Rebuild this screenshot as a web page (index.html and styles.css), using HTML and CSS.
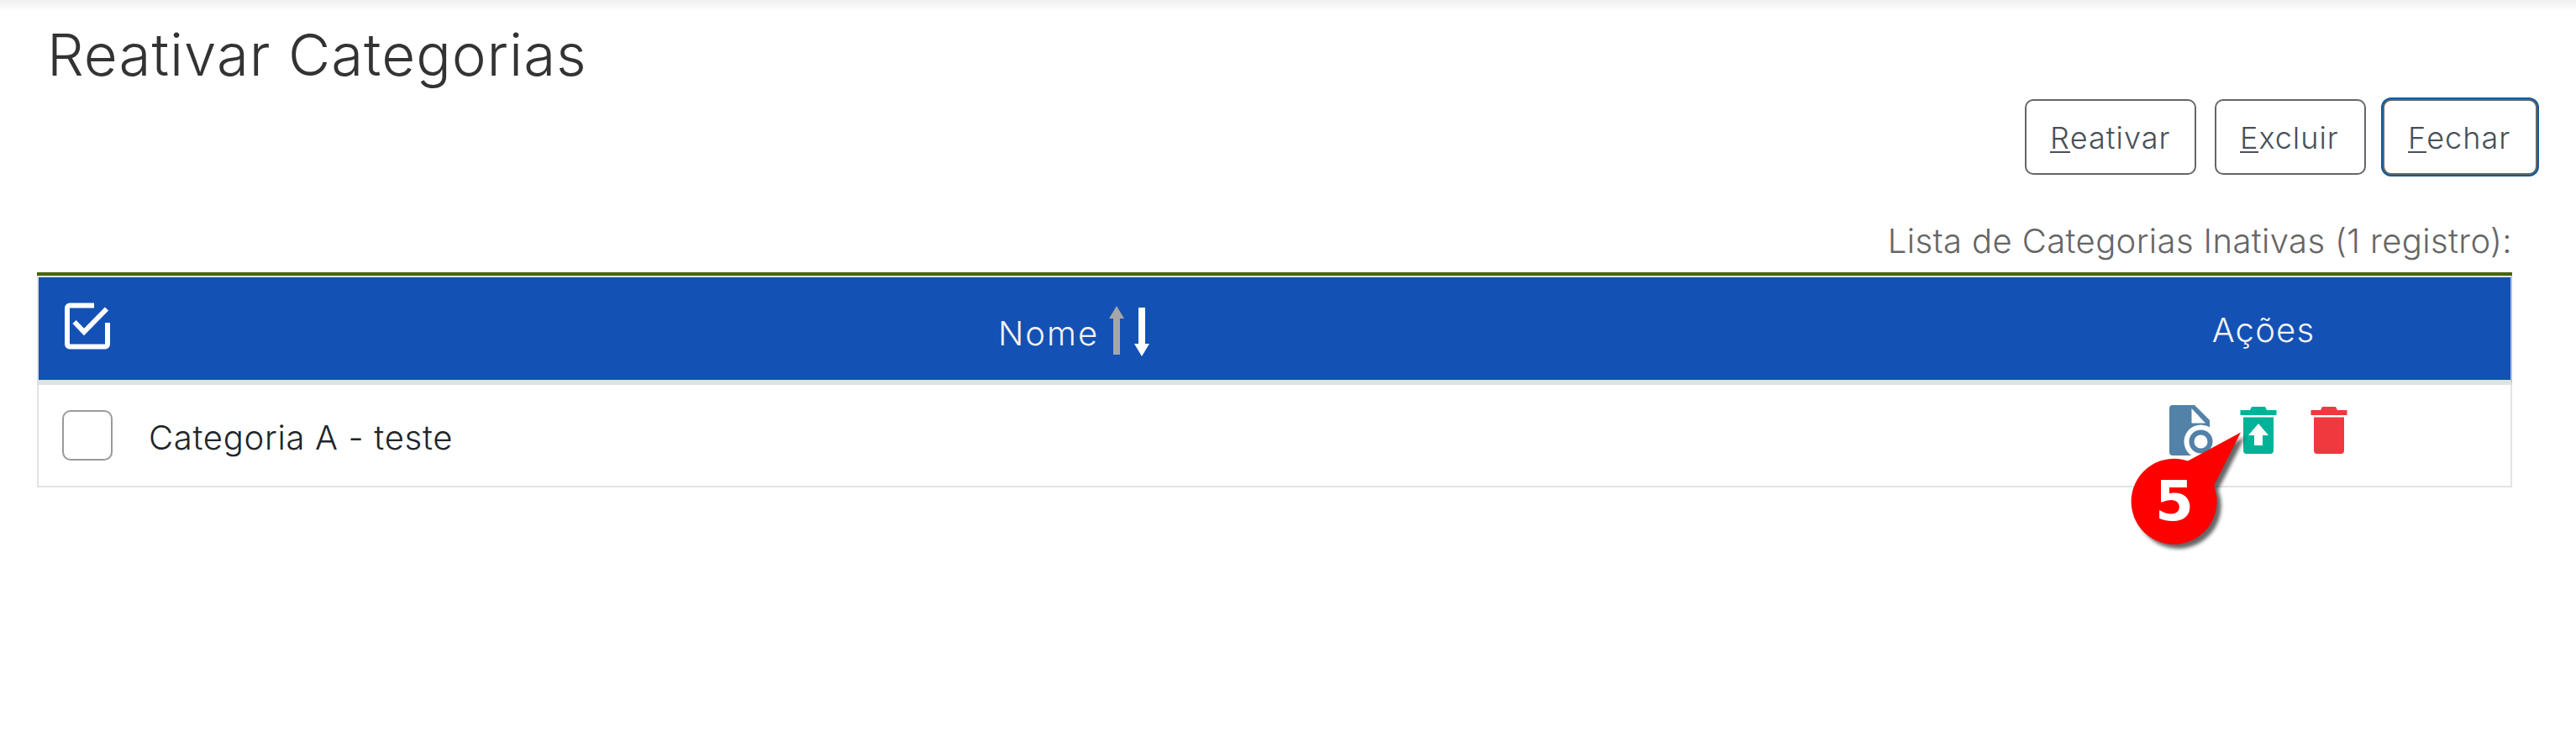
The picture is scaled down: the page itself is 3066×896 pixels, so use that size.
FILE: index.html
```html
<!DOCTYPE html>
<html lang="pt-BR">
<head>
<meta charset="utf-8">
<title>Reativar Categorias</title>
<link rel="stylesheet" href="styles.css">
</head>
<body>
<main class="page">
  <h1 class="title"><span>Reativar Categorias</span></h1>
  <div class="toolbar">
    <button class="btn btn-reativar"><u>R</u>eativar</button>
    <button class="btn btn-excluir"><u>E</u>xcluir</button>
    <button class="btn btn-fechar"><u>F</u>echar</button>
  </div>
  <div class="caption"><span>Lista de Categorias Inativas (1 registro):</span></div>
  <section class="table">
    <div class="row head">
      <div class="cell check">
        <svg class="check-all" width="60" height="60" viewBox="0 0 60 60" fill="none" stroke="#fff" stroke-width="6">
          <path d="M38 6.500H9a3 3 0 0 0-3 3v43a3 3 0 0 0 3 3h42a3 3 0 0 0 3-3V27"/>
          <path d="M14.500 26L26 38L53 10.500"/>
        </svg>
      </div>
      <div class="cell name-head">
        <span class="nome">Nome</span>
        <svg class="sort" width="52" height="62" viewBox="0 0 52 62">
          <path fill="#a6a6a6" d="M11 1L20 16H15V59H7V16H2Z"/>
          <path fill="#fff" d="M41 61L50 46H45V3H37V46H32Z"/>
        </svg>
      </div>
      <div class="cell actions-head"><span class="acoes">Ações</span></div>
    </div>
    <div class="row item">
      <div class="cell check"><span class="checkbox"></span></div>
      <div class="cell name"><span class="categoria">Categoria A - teste</span></div>
      <div class="cell actions">
        <svg class="icon" width="60" height="64" viewBox="0 0 60 64">
          <path fill="#5282a8" d="M6 2H32L50 20V62H6a4 4 0 0 1-4-4V6a4 4 0 0 1 4-4Z"/>
          <path fill="#fff" d="M28.500 6L45 23.500H28.500Z"/>
          <circle cx="39.500" cy="45.500" r="20" fill="#fff"/>
          <circle cx="39.500" cy="45.500" r="11" fill="none" stroke="#5282a8" stroke-width="6"/>
        </svg>
        <svg class="icon" width="48" height="60" viewBox="0 0 48 60">
          <path fill="#00b398" d="M2.500 6H14l2-4H32l2 4H45.500V12H2.500Z M6 14.500H42V54a4 4 0 0 1-4 4H10a4 4 0 0 1-4-4Z"/>
          <path fill="#fff" d="M24 22L36 36H29V48H19V36H12Z"/>
        </svg>
        <svg class="icon" width="48" height="60" viewBox="0 0 48 60">
          <path fill="#f0383f" d="M2.500 6H14l2-4H32l2 4H45.500V12H2.500Z M6 14.500H42V54a4 4 0 0 1-4 4H10a4 4 0 0 1-4-4Z"/>
        </svg>
        <div class="callout">
          <svg class="callout-shape" width="150" height="160" viewBox="0 0 150 160">
            <path fill="#f00" d="M71 38.500L134 4.500L102 68A51 51 0 1 1 71 38.500Z"/>
          </svg>
          <span class="callout-number">5</span>
        </div>
      </div>
    </div>
  </section>
</main>
</body>
</html>
```
FILE: styles.css
```css
* { box-sizing: border-box; }
body {
  margin: 0;
  background: #fff;
  font-family: Inter, "Open Sans", sans-serif;
  font-weight: 300;
}
.page {
  height: 896px;
  padding: 25px 76px 0 44px;
  background: linear-gradient(#f0f0f0, #fff 13px);
}
.title {
  margin: 0 0 0 12px;
  height: 91px;
  color: #333;
  font-size: 69px;
  font-weight: 300;
  line-height: 80px;
  letter-spacing: 1px;
}
.toolbar {
  display: flex;
  justify-content: flex-end;
  height: 94px;
  margin-right: -30px;
  padding-top: 2px;
}
.btn {
  height: 90px;
  padding: 3px 0 0 28px;
  border: 2px solid #666;
  border-radius: 10px;
  background: #fff;
  color: #495057;
  font: 300 36px/83px Inter, "Open Sans", sans-serif;
  letter-spacing: 1px;
  text-align: left;
  white-space: nowrap;
}
.btn u {
  text-decoration: none;
  background: linear-gradient(#495057, #495057) 0 100% / 100% 2px no-repeat;
  display: inline-block;
  height: 39px;
  line-height: 43px;
}
.btn-reativar { width: 204px; margin-right: 22px; }
.btn-excluir { width: 180px; margin-right: 20px; }
.btn-fechar { width: 184px; box-shadow: 0 0 0 2px #125a9c; }
.caption {
  height: 118px;
  padding-top: 52px;
  color: #666;
  font-size: 40px;
  line-height: 50px;
  letter-spacing: 0.38px;
  text-align: right;
}
.table {
  border: 2px solid #e2e3e5;
  border-top: 0;
}
.row {
  display: grid;
  grid-template-columns: 112px 1fr 588px;
}
.head {
  height: 130px;
  margin: 0 -2px;
  border: 2px solid #dee2e6;
  border-bottom-width: 6px;
  border-right-color: #b3c1dc;
  background: #1351b4;
  color: #f2f2f2;
  font-size: 40px;
  box-shadow: 0 -4px 0 #466600;
}
.item { height: 120px; color: #212529; font-size: 40px; }
.cell { display: flex; }
.check-all { margin: 27px 0 0 28px; }
.checkbox {
  width: 60px;
  height: 60px;
  margin: 30px 0 0 28px;
  border: 2px solid #999;
  border-radius: 10px;
}
.name-head { justify-content: center; align-items: flex-start; }
.nome { line-height: 50px; margin-top: 42px; letter-spacing: 2px; }
.sort { margin: 33px 0 0 10px; }
.actions-head { justify-content: center; }
.acoes { line-height: 50px; margin-top: 38px; letter-spacing: 1.2px; }
.categoria { line-height: 50px; margin: 38px 0 0 19px; letter-spacing: 0.7px; }
.actions { position: relative; padding: 22px 0 0 180px; gap: 36px; align-items: flex-start; }
.actions .icon:nth-child(1) { margin-right: -12px; }
.actions .icon:nth-child(n+2) { margin-top: 2px; }
.callout { position: absolute; left: 133px; top: 52px; width: 150px; height: 160px; }
.callout-shape { position: absolute; left: 0; top: 0; overflow: visible; filter: drop-shadow(5px 5px 2px rgba(0, 0, 0, 0.6)); }
.callout-number {
  position: absolute;
  left: 32px;
  top: 49px;
  width: 46px;
  color: #fff;
  font: bold 66px/76px "DejaVu Sans", sans-serif;
}
```
